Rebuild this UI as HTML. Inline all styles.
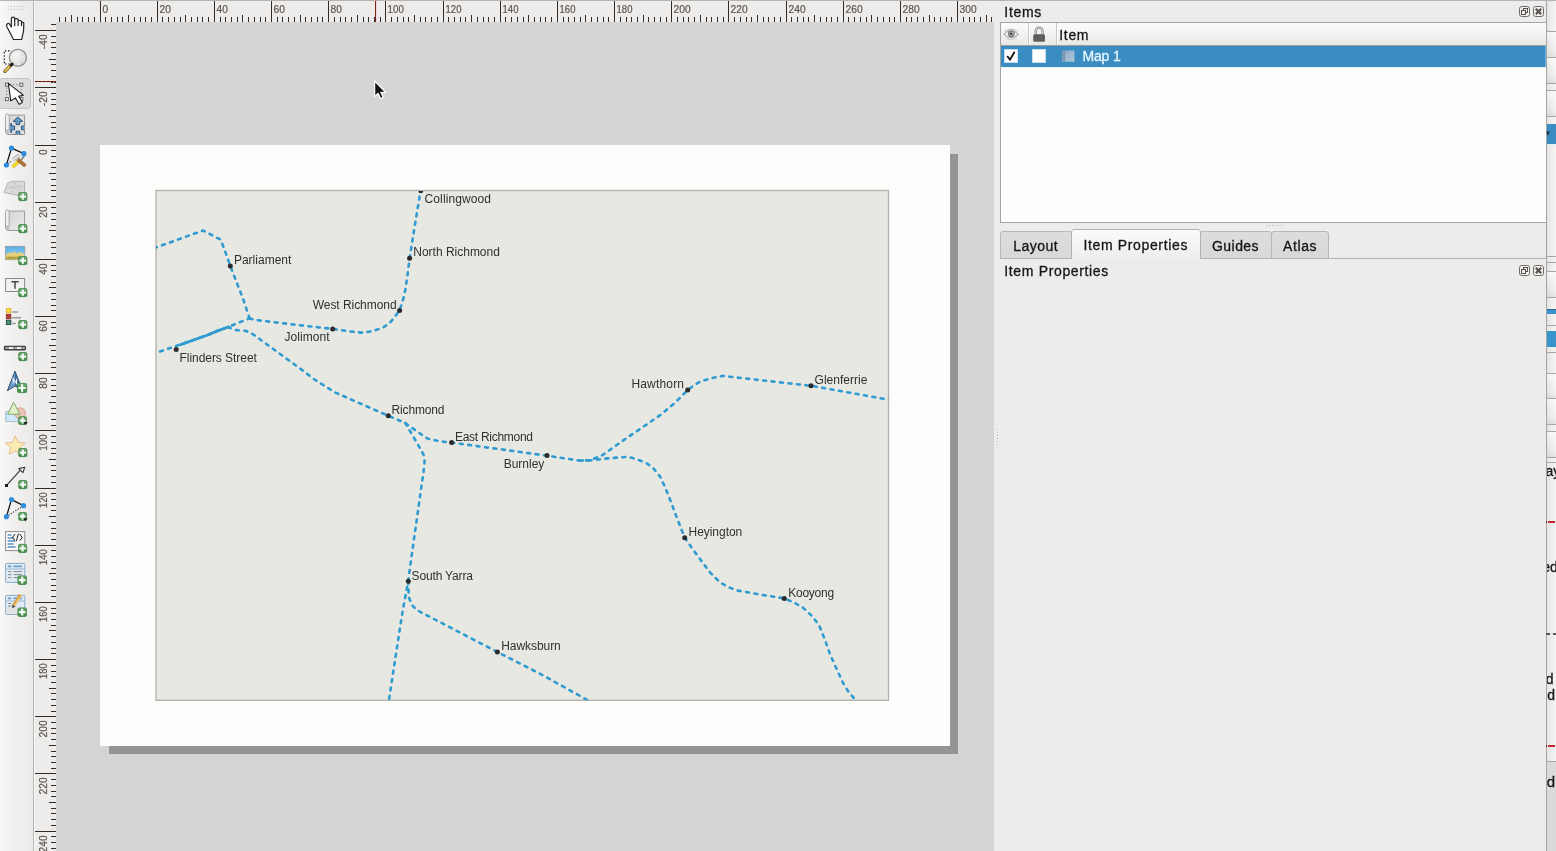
<!DOCTYPE html>
<html><head><meta charset="utf-8"><title>Layout</title>
<style>
html,body{margin:0;padding:0}
body{width:1556px;height:851px;overflow:hidden;position:relative;background:#edeceb;font-family:"Liberation Sans",sans-serif}
.abs{position:absolute;display:block}
</style></head><body>
<div class="abs" style="left:0;top:0;width:1556px;height:1px;background:#b5b4b2"></div>
<div class="abs" style="left:56px;top:22px;width:938px;height:829px;background:#d6d5d4"></div>
<svg class="abs" style="left:56px;top:22px" width="938" height="829" viewBox="56 22 938 829">
<rect x="109" y="154" width="849" height="600" fill="#969594" shape-rendering="crispEdges"/>
<rect x="100" y="145" width="850" height="601" fill="#fefdfc" shape-rendering="crispEdges"/>
<defs><clipPath id="mc"><rect x="156" y="191" width="732.5" height="509.3"/></clipPath></defs>
<rect x="156" y="190.5" width="732.5" height="509.8" fill="#e8e8e3" stroke="#b1b1af" stroke-width="1.35"/>
<g clip-path="url(#mc)" fill="none" stroke="#2f9bd0" stroke-width="2.6" stroke-linecap="round" stroke-linejoin="round" stroke-dasharray="3.0 5.5">
<path d="M154,248.2 L203,230.5 L220.6,239.6 L223.8,247.6 L230.3,265.9 L243.5,300 L249.5,318.3"/>
<path d="M249.5,318.3 L254.1,319.8 L300,325.3 L332.7,328.9 L350,331.5 L362.8,332.7 L373,331 L382.8,327.7 L389,323.5 L394,318 L399.6,310.4 L403,300 L405.3,290.1 L407.5,275 L409.6,258.3 L415.3,222.5 L420.3,192.5 L421,186"/>
<path d="M152,354.3 L180.4,344.5 L207.8,334.9 L217.5,330.8 L230,326.2 L249.5,318.3"/>
<path d="M228,327 L234.8,330 L245.4,330.8 L252.2,333.7 L300,368.4 L315.2,380 L335.2,392.5 L388.3,415.8 L405.3,423 L415,430 L427.8,438.8 L440,441.3 L451.6,442.6 L539,454.6 L547,455.6 L565,458.5 L580,460.6 L590,460.3 L602.6,455 L620.1,442.6 L640.2,428.9 L660.2,415.1 L675.2,402.6 L687.7,390 L694.6,384.8 L701,381.2 L711,378.3 L722.4,375.9 L811,385.8 L892,400.3"/>
<path d="M580,460.6 L590,460.5 L600,459.2 L612,458 L625,457 L632,457.8 L640,460.5 L647.7,463.9 L654,469 L660,476.4 L665,487 L670.2,500 L677,518 L684.7,537.7 L695.2,552.6 L710.2,572.6 L720.2,582.6 L728,587 L737.8,590.6 L760.3,594.6 L784.3,598.4 L795,603 L802.9,607.6 L812,616 L819.1,625.2 L825,640 L830.4,655.2 L842.9,682.7 L848,691 L858,703"/>
<path d="M405.3,423 L410,431 L415.3,440 L421,450 L423.7,455 L424.6,461 L423.6,472 L421.6,485 L415.3,530 L410.3,565 L408.3,581 L402.8,610 L396.6,650 L388.5,703"/>
<path d="M408.3,581 L408.5,590 L409,597.6 L412,605 L416.6,610 L497.4,652 L539,673.2 L590,701.5"/>
<path d="M180.6,344.6 L207.8,335 L217.5,330.9 L228.5,327" stroke-dasharray="none" stroke-width="2.8"/>
</g>
<g clip-path="url(#mc)" fill="#2b2b2b">
<circle cx="420.8" cy="190.8" r="2.5"/>
<circle cx="409.6" cy="258.3" r="2.5"/>
<circle cx="230.3" cy="265.9" r="2.5"/>
<circle cx="399.6" cy="310.4" r="2.5"/>
<circle cx="332.7" cy="328.9" r="2.5"/>
<circle cx="176.2" cy="349.5" r="2.5"/>
<circle cx="388.3" cy="415.8" r="2.5"/>
<circle cx="451.6" cy="442.6" r="2.5"/>
<circle cx="547" cy="455.6" r="2.5"/>
<circle cx="687.7" cy="390" r="2.5"/>
<circle cx="811" cy="385.8" r="2.5"/>
<circle cx="684.7" cy="537.7" r="2.5"/>
<circle cx="784.3" cy="598.4" r="2.5"/>
<circle cx="408.3" cy="581.2" r="2.5"/>
<circle cx="497.4" cy="652" r="2.5"/>
</g>
</svg>
<svg class="abs" style="left:56px;top:22px;will-change:transform;opacity:0.999" width="938" height="829" viewBox="56 22 938 829">
<g font-family="Liberation Sans, sans-serif" font-size="12" fill="#303030">
<text x="424.6" y="202.5" textLength="66.3" lengthAdjust="spacing">Collingwood</text>
<text x="413.3" y="256.3" textLength="86.6" lengthAdjust="spacing">North Richmond</text>
<text x="233.9" y="264.4" textLength="57.5" lengthAdjust="spacing">Parliament</text>
<text x="312.7" y="308.9" textLength="83.9" lengthAdjust="spacing">West Richmond</text>
<text x="284.4" y="341" textLength="45.3" lengthAdjust="spacing">Jolimont</text>
<text x="179.5" y="361.5" textLength="77.4" lengthAdjust="spacing">Flinders Street</text>
<text x="391.6" y="414" textLength="52.8" lengthAdjust="spacing">Richmond</text>
<text x="454.9" y="440.8" textLength="78.1" lengthAdjust="spacing">East Richmond</text>
<text x="503.7" y="467.7" textLength="40.6" lengthAdjust="spacing">Burnley</text>
<text x="631.4" y="388" textLength="52.6" lengthAdjust="spacing">Hawthorn</text>
<text x="814.6" y="383.8" textLength="52.8" lengthAdjust="spacing">Glenferrie</text>
<text x="688.5" y="536" textLength="53.8" lengthAdjust="spacing">Heyington</text>
<text x="788.3" y="596.9" textLength="45.8" lengthAdjust="spacing">Kooyong</text>
<text x="411.6" y="579.5" textLength="61.3" lengthAdjust="spacing">South Yarra</text>
<text x="501.2" y="650.2" textLength="59.6" lengthAdjust="spacing">Hawksburn</text>
</g>
<path d="M374.6,81 L374.6,96.6 L378.1,93.4 L380.6,98.7 L383.3,97.5 L380.9,92.3 L385.8,92.3 Z" fill="#111" stroke="#fbfbfb" stroke-width="1.3" stroke-linejoin="round"/>
</svg>
<svg class="abs" style="left:0;top:0" width="1556" height="851" viewBox="0 0 1556 851" shape-rendering="crispEdges">
<rect x="34" y="1" width="960" height="21" fill="#edeceb"/>
<rect x="34" y="22" width="22" height="829" fill="#edeceb"/>
<rect x="59" y="17" width="1" height="5" fill="#2e2b28"/>
<rect x="65" y="17" width="1" height="5" fill="#2e2b28"/>
<rect x="71" y="15" width="1" height="7" fill="#2e2b28"/>
<rect x="77" y="17" width="1" height="5" fill="#2e2b28"/>
<rect x="82" y="17" width="1" height="5" fill="#2e2b28"/>
<rect x="88" y="17" width="1" height="5" fill="#2e2b28"/>
<rect x="94" y="17" width="1" height="5" fill="#2e2b28"/>
<rect x="100" y="1" width="1" height="21" fill="#2e2b28"/>
<rect x="105" y="17" width="1" height="5" fill="#2e2b28"/>
<rect x="111" y="17" width="1" height="5" fill="#2e2b28"/>
<rect x="117" y="17" width="1" height="5" fill="#2e2b28"/>
<rect x="122" y="17" width="1" height="5" fill="#2e2b28"/>
<rect x="128" y="15" width="1" height="7" fill="#2e2b28"/>
<rect x="134" y="17" width="1" height="5" fill="#2e2b28"/>
<rect x="140" y="17" width="1" height="5" fill="#2e2b28"/>
<rect x="145" y="17" width="1" height="5" fill="#2e2b28"/>
<rect x="151" y="17" width="1" height="5" fill="#2e2b28"/>
<rect x="157" y="1" width="1" height="21" fill="#2e2b28"/>
<rect x="162" y="17" width="1" height="5" fill="#2e2b28"/>
<rect x="168" y="17" width="1" height="5" fill="#2e2b28"/>
<rect x="174" y="17" width="1" height="5" fill="#2e2b28"/>
<rect x="180" y="17" width="1" height="5" fill="#2e2b28"/>
<rect x="185" y="15" width="1" height="7" fill="#2e2b28"/>
<rect x="191" y="17" width="1" height="5" fill="#2e2b28"/>
<rect x="197" y="17" width="1" height="5" fill="#2e2b28"/>
<rect x="202" y="17" width="1" height="5" fill="#2e2b28"/>
<rect x="208" y="17" width="1" height="5" fill="#2e2b28"/>
<rect x="214" y="1" width="1" height="21" fill="#2e2b28"/>
<rect x="220" y="17" width="1" height="5" fill="#2e2b28"/>
<rect x="225" y="17" width="1" height="5" fill="#2e2b28"/>
<rect x="231" y="17" width="1" height="5" fill="#2e2b28"/>
<rect x="237" y="17" width="1" height="5" fill="#2e2b28"/>
<rect x="242" y="15" width="1" height="7" fill="#2e2b28"/>
<rect x="248" y="17" width="1" height="5" fill="#2e2b28"/>
<rect x="254" y="17" width="1" height="5" fill="#2e2b28"/>
<rect x="260" y="17" width="1" height="5" fill="#2e2b28"/>
<rect x="265" y="17" width="1" height="5" fill="#2e2b28"/>
<rect x="271" y="1" width="1" height="21" fill="#2e2b28"/>
<rect x="277" y="17" width="1" height="5" fill="#2e2b28"/>
<rect x="282" y="17" width="1" height="5" fill="#2e2b28"/>
<rect x="288" y="17" width="1" height="5" fill="#2e2b28"/>
<rect x="294" y="17" width="1" height="5" fill="#2e2b28"/>
<rect x="300" y="15" width="1" height="7" fill="#2e2b28"/>
<rect x="305" y="17" width="1" height="5" fill="#2e2b28"/>
<rect x="311" y="17" width="1" height="5" fill="#2e2b28"/>
<rect x="317" y="17" width="1" height="5" fill="#2e2b28"/>
<rect x="322" y="17" width="1" height="5" fill="#2e2b28"/>
<rect x="328" y="1" width="1" height="21" fill="#2e2b28"/>
<rect x="334" y="17" width="1" height="5" fill="#2e2b28"/>
<rect x="340" y="17" width="1" height="5" fill="#2e2b28"/>
<rect x="345" y="17" width="1" height="5" fill="#2e2b28"/>
<rect x="351" y="17" width="1" height="5" fill="#2e2b28"/>
<rect x="357" y="15" width="1" height="7" fill="#2e2b28"/>
<rect x="363" y="17" width="1" height="5" fill="#2e2b28"/>
<rect x="368" y="17" width="1" height="5" fill="#2e2b28"/>
<rect x="374" y="17" width="1" height="5" fill="#2e2b28"/>
<rect x="380" y="17" width="1" height="5" fill="#2e2b28"/>
<rect x="385" y="1" width="1" height="21" fill="#2e2b28"/>
<rect x="391" y="17" width="1" height="5" fill="#2e2b28"/>
<rect x="397" y="17" width="1" height="5" fill="#2e2b28"/>
<rect x="403" y="17" width="1" height="5" fill="#2e2b28"/>
<rect x="408" y="17" width="1" height="5" fill="#2e2b28"/>
<rect x="414" y="15" width="1" height="7" fill="#2e2b28"/>
<rect x="420" y="17" width="1" height="5" fill="#2e2b28"/>
<rect x="425" y="17" width="1" height="5" fill="#2e2b28"/>
<rect x="431" y="17" width="1" height="5" fill="#2e2b28"/>
<rect x="437" y="17" width="1" height="5" fill="#2e2b28"/>
<rect x="443" y="1" width="1" height="21" fill="#2e2b28"/>
<rect x="448" y="17" width="1" height="5" fill="#2e2b28"/>
<rect x="454" y="17" width="1" height="5" fill="#2e2b28"/>
<rect x="460" y="17" width="1" height="5" fill="#2e2b28"/>
<rect x="465" y="17" width="1" height="5" fill="#2e2b28"/>
<rect x="471" y="15" width="1" height="7" fill="#2e2b28"/>
<rect x="477" y="17" width="1" height="5" fill="#2e2b28"/>
<rect x="483" y="17" width="1" height="5" fill="#2e2b28"/>
<rect x="488" y="17" width="1" height="5" fill="#2e2b28"/>
<rect x="494" y="17" width="1" height="5" fill="#2e2b28"/>
<rect x="500" y="1" width="1" height="21" fill="#2e2b28"/>
<rect x="505" y="17" width="1" height="5" fill="#2e2b28"/>
<rect x="511" y="17" width="1" height="5" fill="#2e2b28"/>
<rect x="517" y="17" width="1" height="5" fill="#2e2b28"/>
<rect x="523" y="17" width="1" height="5" fill="#2e2b28"/>
<rect x="528" y="15" width="1" height="7" fill="#2e2b28"/>
<rect x="534" y="17" width="1" height="5" fill="#2e2b28"/>
<rect x="540" y="17" width="1" height="5" fill="#2e2b28"/>
<rect x="545" y="17" width="1" height="5" fill="#2e2b28"/>
<rect x="551" y="17" width="1" height="5" fill="#2e2b28"/>
<rect x="557" y="1" width="1" height="21" fill="#2e2b28"/>
<rect x="563" y="17" width="1" height="5" fill="#2e2b28"/>
<rect x="568" y="17" width="1" height="5" fill="#2e2b28"/>
<rect x="574" y="17" width="1" height="5" fill="#2e2b28"/>
<rect x="580" y="17" width="1" height="5" fill="#2e2b28"/>
<rect x="585" y="15" width="1" height="7" fill="#2e2b28"/>
<rect x="591" y="17" width="1" height="5" fill="#2e2b28"/>
<rect x="597" y="17" width="1" height="5" fill="#2e2b28"/>
<rect x="603" y="17" width="1" height="5" fill="#2e2b28"/>
<rect x="608" y="17" width="1" height="5" fill="#2e2b28"/>
<rect x="614" y="1" width="1" height="21" fill="#2e2b28"/>
<rect x="620" y="17" width="1" height="5" fill="#2e2b28"/>
<rect x="626" y="17" width="1" height="5" fill="#2e2b28"/>
<rect x="631" y="17" width="1" height="5" fill="#2e2b28"/>
<rect x="637" y="17" width="1" height="5" fill="#2e2b28"/>
<rect x="643" y="15" width="1" height="7" fill="#2e2b28"/>
<rect x="648" y="17" width="1" height="5" fill="#2e2b28"/>
<rect x="654" y="17" width="1" height="5" fill="#2e2b28"/>
<rect x="660" y="17" width="1" height="5" fill="#2e2b28"/>
<rect x="666" y="17" width="1" height="5" fill="#2e2b28"/>
<rect x="671" y="1" width="1" height="21" fill="#2e2b28"/>
<rect x="677" y="17" width="1" height="5" fill="#2e2b28"/>
<rect x="683" y="17" width="1" height="5" fill="#2e2b28"/>
<rect x="688" y="17" width="1" height="5" fill="#2e2b28"/>
<rect x="694" y="17" width="1" height="5" fill="#2e2b28"/>
<rect x="700" y="15" width="1" height="7" fill="#2e2b28"/>
<rect x="706" y="17" width="1" height="5" fill="#2e2b28"/>
<rect x="711" y="17" width="1" height="5" fill="#2e2b28"/>
<rect x="717" y="17" width="1" height="5" fill="#2e2b28"/>
<rect x="723" y="17" width="1" height="5" fill="#2e2b28"/>
<rect x="728" y="1" width="1" height="21" fill="#2e2b28"/>
<rect x="734" y="17" width="1" height="5" fill="#2e2b28"/>
<rect x="740" y="17" width="1" height="5" fill="#2e2b28"/>
<rect x="746" y="17" width="1" height="5" fill="#2e2b28"/>
<rect x="751" y="17" width="1" height="5" fill="#2e2b28"/>
<rect x="757" y="15" width="1" height="7" fill="#2e2b28"/>
<rect x="763" y="17" width="1" height="5" fill="#2e2b28"/>
<rect x="768" y="17" width="1" height="5" fill="#2e2b28"/>
<rect x="774" y="17" width="1" height="5" fill="#2e2b28"/>
<rect x="780" y="17" width="1" height="5" fill="#2e2b28"/>
<rect x="786" y="1" width="1" height="21" fill="#2e2b28"/>
<rect x="791" y="17" width="1" height="5" fill="#2e2b28"/>
<rect x="797" y="17" width="1" height="5" fill="#2e2b28"/>
<rect x="803" y="17" width="1" height="5" fill="#2e2b28"/>
<rect x="808" y="17" width="1" height="5" fill="#2e2b28"/>
<rect x="814" y="15" width="1" height="7" fill="#2e2b28"/>
<rect x="820" y="17" width="1" height="5" fill="#2e2b28"/>
<rect x="826" y="17" width="1" height="5" fill="#2e2b28"/>
<rect x="831" y="17" width="1" height="5" fill="#2e2b28"/>
<rect x="837" y="17" width="1" height="5" fill="#2e2b28"/>
<rect x="843" y="1" width="1" height="21" fill="#2e2b28"/>
<rect x="848" y="17" width="1" height="5" fill="#2e2b28"/>
<rect x="854" y="17" width="1" height="5" fill="#2e2b28"/>
<rect x="860" y="17" width="1" height="5" fill="#2e2b28"/>
<rect x="866" y="17" width="1" height="5" fill="#2e2b28"/>
<rect x="871" y="15" width="1" height="7" fill="#2e2b28"/>
<rect x="877" y="17" width="1" height="5" fill="#2e2b28"/>
<rect x="883" y="17" width="1" height="5" fill="#2e2b28"/>
<rect x="889" y="17" width="1" height="5" fill="#2e2b28"/>
<rect x="894" y="17" width="1" height="5" fill="#2e2b28"/>
<rect x="900" y="1" width="1" height="21" fill="#2e2b28"/>
<rect x="906" y="17" width="1" height="5" fill="#2e2b28"/>
<rect x="911" y="17" width="1" height="5" fill="#2e2b28"/>
<rect x="917" y="17" width="1" height="5" fill="#2e2b28"/>
<rect x="923" y="17" width="1" height="5" fill="#2e2b28"/>
<rect x="929" y="15" width="1" height="7" fill="#2e2b28"/>
<rect x="934" y="17" width="1" height="5" fill="#2e2b28"/>
<rect x="940" y="17" width="1" height="5" fill="#2e2b28"/>
<rect x="946" y="17" width="1" height="5" fill="#2e2b28"/>
<rect x="951" y="17" width="1" height="5" fill="#2e2b28"/>
<rect x="957" y="1" width="1" height="21" fill="#2e2b28"/>
<rect x="963" y="17" width="1" height="5" fill="#2e2b28"/>
<rect x="969" y="17" width="1" height="5" fill="#2e2b28"/>
<rect x="974" y="17" width="1" height="5" fill="#2e2b28"/>
<rect x="980" y="17" width="1" height="5" fill="#2e2b28"/>
<rect x="986" y="15" width="1" height="7" fill="#2e2b28"/>
<rect x="991" y="17" width="1" height="5" fill="#2e2b28"/>
<rect x="51" y="24" width="5" height="1" fill="#2e2b28"/>
<rect x="35" y="30" width="21" height="1" fill="#2e2b28"/>
<rect x="51" y="36" width="5" height="1" fill="#2e2b28"/>
<rect x="51" y="42" width="5" height="1" fill="#2e2b28"/>
<rect x="51" y="47" width="5" height="1" fill="#2e2b28"/>
<rect x="51" y="53" width="5" height="1" fill="#2e2b28"/>
<rect x="49" y="59" width="7" height="1" fill="#2e2b28"/>
<rect x="51" y="64" width="5" height="1" fill="#2e2b28"/>
<rect x="51" y="70" width="5" height="1" fill="#2e2b28"/>
<rect x="51" y="76" width="5" height="1" fill="#2e2b28"/>
<rect x="51" y="82" width="5" height="1" fill="#2e2b28"/>
<rect x="35" y="87" width="21" height="1" fill="#2e2b28"/>
<rect x="51" y="93" width="5" height="1" fill="#2e2b28"/>
<rect x="51" y="99" width="5" height="1" fill="#2e2b28"/>
<rect x="51" y="104" width="5" height="1" fill="#2e2b28"/>
<rect x="51" y="110" width="5" height="1" fill="#2e2b28"/>
<rect x="49" y="116" width="7" height="1" fill="#2e2b28"/>
<rect x="51" y="122" width="5" height="1" fill="#2e2b28"/>
<rect x="51" y="127" width="5" height="1" fill="#2e2b28"/>
<rect x="51" y="133" width="5" height="1" fill="#2e2b28"/>
<rect x="51" y="139" width="5" height="1" fill="#2e2b28"/>
<rect x="35" y="145" width="21" height="1" fill="#2e2b28"/>
<rect x="51" y="150" width="5" height="1" fill="#2e2b28"/>
<rect x="51" y="156" width="5" height="1" fill="#2e2b28"/>
<rect x="51" y="162" width="5" height="1" fill="#2e2b28"/>
<rect x="51" y="167" width="5" height="1" fill="#2e2b28"/>
<rect x="49" y="173" width="7" height="1" fill="#2e2b28"/>
<rect x="51" y="179" width="5" height="1" fill="#2e2b28"/>
<rect x="51" y="185" width="5" height="1" fill="#2e2b28"/>
<rect x="51" y="190" width="5" height="1" fill="#2e2b28"/>
<rect x="51" y="196" width="5" height="1" fill="#2e2b28"/>
<rect x="35" y="202" width="21" height="1" fill="#2e2b28"/>
<rect x="51" y="207" width="5" height="1" fill="#2e2b28"/>
<rect x="51" y="213" width="5" height="1" fill="#2e2b28"/>
<rect x="51" y="219" width="5" height="1" fill="#2e2b28"/>
<rect x="51" y="225" width="5" height="1" fill="#2e2b28"/>
<rect x="49" y="230" width="7" height="1" fill="#2e2b28"/>
<rect x="51" y="236" width="5" height="1" fill="#2e2b28"/>
<rect x="51" y="242" width="5" height="1" fill="#2e2b28"/>
<rect x="51" y="247" width="5" height="1" fill="#2e2b28"/>
<rect x="51" y="253" width="5" height="1" fill="#2e2b28"/>
<rect x="35" y="259" width="21" height="1" fill="#2e2b28"/>
<rect x="51" y="265" width="5" height="1" fill="#2e2b28"/>
<rect x="51" y="270" width="5" height="1" fill="#2e2b28"/>
<rect x="51" y="276" width="5" height="1" fill="#2e2b28"/>
<rect x="51" y="282" width="5" height="1" fill="#2e2b28"/>
<rect x="49" y="287" width="7" height="1" fill="#2e2b28"/>
<rect x="51" y="293" width="5" height="1" fill="#2e2b28"/>
<rect x="51" y="299" width="5" height="1" fill="#2e2b28"/>
<rect x="51" y="305" width="5" height="1" fill="#2e2b28"/>
<rect x="51" y="310" width="5" height="1" fill="#2e2b28"/>
<rect x="35" y="316" width="21" height="1" fill="#2e2b28"/>
<rect x="51" y="322" width="5" height="1" fill="#2e2b28"/>
<rect x="51" y="327" width="5" height="1" fill="#2e2b28"/>
<rect x="51" y="333" width="5" height="1" fill="#2e2b28"/>
<rect x="51" y="339" width="5" height="1" fill="#2e2b28"/>
<rect x="49" y="345" width="7" height="1" fill="#2e2b28"/>
<rect x="51" y="350" width="5" height="1" fill="#2e2b28"/>
<rect x="51" y="356" width="5" height="1" fill="#2e2b28"/>
<rect x="51" y="362" width="5" height="1" fill="#2e2b28"/>
<rect x="51" y="367" width="5" height="1" fill="#2e2b28"/>
<rect x="35" y="373" width="21" height="1" fill="#2e2b28"/>
<rect x="51" y="379" width="5" height="1" fill="#2e2b28"/>
<rect x="51" y="385" width="5" height="1" fill="#2e2b28"/>
<rect x="51" y="390" width="5" height="1" fill="#2e2b28"/>
<rect x="51" y="396" width="5" height="1" fill="#2e2b28"/>
<rect x="49" y="402" width="7" height="1" fill="#2e2b28"/>
<rect x="51" y="408" width="5" height="1" fill="#2e2b28"/>
<rect x="51" y="413" width="5" height="1" fill="#2e2b28"/>
<rect x="51" y="419" width="5" height="1" fill="#2e2b28"/>
<rect x="51" y="425" width="5" height="1" fill="#2e2b28"/>
<rect x="35" y="430" width="21" height="1" fill="#2e2b28"/>
<rect x="51" y="436" width="5" height="1" fill="#2e2b28"/>
<rect x="51" y="442" width="5" height="1" fill="#2e2b28"/>
<rect x="51" y="448" width="5" height="1" fill="#2e2b28"/>
<rect x="51" y="453" width="5" height="1" fill="#2e2b28"/>
<rect x="49" y="459" width="7" height="1" fill="#2e2b28"/>
<rect x="51" y="465" width="5" height="1" fill="#2e2b28"/>
<rect x="51" y="470" width="5" height="1" fill="#2e2b28"/>
<rect x="51" y="476" width="5" height="1" fill="#2e2b28"/>
<rect x="51" y="482" width="5" height="1" fill="#2e2b28"/>
<rect x="35" y="488" width="21" height="1" fill="#2e2b28"/>
<rect x="51" y="493" width="5" height="1" fill="#2e2b28"/>
<rect x="51" y="499" width="5" height="1" fill="#2e2b28"/>
<rect x="51" y="505" width="5" height="1" fill="#2e2b28"/>
<rect x="51" y="510" width="5" height="1" fill="#2e2b28"/>
<rect x="49" y="516" width="7" height="1" fill="#2e2b28"/>
<rect x="51" y="522" width="5" height="1" fill="#2e2b28"/>
<rect x="51" y="528" width="5" height="1" fill="#2e2b28"/>
<rect x="51" y="533" width="5" height="1" fill="#2e2b28"/>
<rect x="51" y="539" width="5" height="1" fill="#2e2b28"/>
<rect x="35" y="545" width="21" height="1" fill="#2e2b28"/>
<rect x="51" y="550" width="5" height="1" fill="#2e2b28"/>
<rect x="51" y="556" width="5" height="1" fill="#2e2b28"/>
<rect x="51" y="562" width="5" height="1" fill="#2e2b28"/>
<rect x="51" y="568" width="5" height="1" fill="#2e2b28"/>
<rect x="49" y="573" width="7" height="1" fill="#2e2b28"/>
<rect x="51" y="579" width="5" height="1" fill="#2e2b28"/>
<rect x="51" y="585" width="5" height="1" fill="#2e2b28"/>
<rect x="51" y="590" width="5" height="1" fill="#2e2b28"/>
<rect x="51" y="596" width="5" height="1" fill="#2e2b28"/>
<rect x="35" y="602" width="21" height="1" fill="#2e2b28"/>
<rect x="51" y="608" width="5" height="1" fill="#2e2b28"/>
<rect x="51" y="613" width="5" height="1" fill="#2e2b28"/>
<rect x="51" y="619" width="5" height="1" fill="#2e2b28"/>
<rect x="51" y="625" width="5" height="1" fill="#2e2b28"/>
<rect x="49" y="630" width="7" height="1" fill="#2e2b28"/>
<rect x="51" y="636" width="5" height="1" fill="#2e2b28"/>
<rect x="51" y="642" width="5" height="1" fill="#2e2b28"/>
<rect x="51" y="648" width="5" height="1" fill="#2e2b28"/>
<rect x="51" y="653" width="5" height="1" fill="#2e2b28"/>
<rect x="35" y="659" width="21" height="1" fill="#2e2b28"/>
<rect x="51" y="665" width="5" height="1" fill="#2e2b28"/>
<rect x="51" y="671" width="5" height="1" fill="#2e2b28"/>
<rect x="51" y="676" width="5" height="1" fill="#2e2b28"/>
<rect x="51" y="682" width="5" height="1" fill="#2e2b28"/>
<rect x="49" y="688" width="7" height="1" fill="#2e2b28"/>
<rect x="51" y="693" width="5" height="1" fill="#2e2b28"/>
<rect x="51" y="699" width="5" height="1" fill="#2e2b28"/>
<rect x="51" y="705" width="5" height="1" fill="#2e2b28"/>
<rect x="51" y="711" width="5" height="1" fill="#2e2b28"/>
<rect x="35" y="716" width="21" height="1" fill="#2e2b28"/>
<rect x="51" y="722" width="5" height="1" fill="#2e2b28"/>
<rect x="51" y="728" width="5" height="1" fill="#2e2b28"/>
<rect x="51" y="733" width="5" height="1" fill="#2e2b28"/>
<rect x="51" y="739" width="5" height="1" fill="#2e2b28"/>
<rect x="49" y="745" width="7" height="1" fill="#2e2b28"/>
<rect x="51" y="751" width="5" height="1" fill="#2e2b28"/>
<rect x="51" y="756" width="5" height="1" fill="#2e2b28"/>
<rect x="51" y="762" width="5" height="1" fill="#2e2b28"/>
<rect x="51" y="768" width="5" height="1" fill="#2e2b28"/>
<rect x="35" y="773" width="21" height="1" fill="#2e2b28"/>
<rect x="51" y="779" width="5" height="1" fill="#2e2b28"/>
<rect x="51" y="785" width="5" height="1" fill="#2e2b28"/>
<rect x="51" y="791" width="5" height="1" fill="#2e2b28"/>
<rect x="51" y="796" width="5" height="1" fill="#2e2b28"/>
<rect x="49" y="802" width="7" height="1" fill="#2e2b28"/>
<rect x="51" y="808" width="5" height="1" fill="#2e2b28"/>
<rect x="51" y="813" width="5" height="1" fill="#2e2b28"/>
<rect x="51" y="819" width="5" height="1" fill="#2e2b28"/>
<rect x="51" y="825" width="5" height="1" fill="#2e2b28"/>
<rect x="35" y="831" width="21" height="1" fill="#2e2b28"/>
<rect x="51" y="836" width="5" height="1" fill="#2e2b28"/>
<rect x="51" y="842" width="5" height="1" fill="#2e2b28"/>
<rect x="51" y="848" width="5" height="1" fill="#2e2b28"/>
</svg>
<svg class="abs" style="left:0;top:0;will-change:transform;opacity:0.999" width="1556" height="851" viewBox="0 0 1556 851" font-family="Liberation Sans, sans-serif" font-size="10.2" fill="#5a554f" stroke="#5a554f" stroke-width="0.2">
<text x="102.6" y="12.8">0</text>
<text x="159.6" y="12.8">20</text>
<text x="216.6" y="12.8">40</text>
<text x="273.6" y="12.8">60</text>
<text x="330.6" y="12.8">80</text>
<text x="387.6" y="12.8" textLength="16.3" lengthAdjust="spacingAndGlyphs">100</text>
<text x="445.6" y="12.8" textLength="15.8" lengthAdjust="spacingAndGlyphs">120</text>
<text x="502.6" y="12.8" textLength="15.8" lengthAdjust="spacingAndGlyphs">140</text>
<text x="559.6" y="12.8" textLength="15.8" lengthAdjust="spacingAndGlyphs">160</text>
<text x="616.6" y="12.8" textLength="15.8" lengthAdjust="spacingAndGlyphs">180</text>
<text x="673.6" y="12.8">200</text>
<text x="730.6" y="12.8">220</text>
<text x="788.6" y="12.8">240</text>
<text x="845.6" y="12.8">260</text>
<text x="902.6" y="12.8">280</text>
<text x="959.6" y="12.8">300</text>
<text transform="translate(46.6,34.4) rotate(-90)" text-anchor="end">-40</text>
<text transform="translate(46.6,91.4) rotate(-90)" text-anchor="end">-20</text>
<text transform="translate(46.6,149.4) rotate(-90)" text-anchor="end">0</text>
<text transform="translate(46.6,206.4) rotate(-90)" text-anchor="end">20</text>
<text transform="translate(46.6,263.4) rotate(-90)" text-anchor="end">40</text>
<text transform="translate(46.6,320.4) rotate(-90)" text-anchor="end">60</text>
<text transform="translate(46.6,377.4) rotate(-90)" text-anchor="end">80</text>
<text transform="translate(46.6,434.4) rotate(-90)" text-anchor="end" textLength="16.4" lengthAdjust="spacingAndGlyphs">100</text>
<text transform="translate(46.6,492.4) rotate(-90)" text-anchor="end" textLength="15.5" lengthAdjust="spacingAndGlyphs">120</text>
<text transform="translate(46.6,549.4) rotate(-90)" text-anchor="end" textLength="15.5" lengthAdjust="spacingAndGlyphs">140</text>
<text transform="translate(46.6,606.4) rotate(-90)" text-anchor="end" textLength="15.5" lengthAdjust="spacingAndGlyphs">160</text>
<text transform="translate(46.6,663.4) rotate(-90)" text-anchor="end" textLength="15.5" lengthAdjust="spacingAndGlyphs">180</text>
<text transform="translate(46.6,720.4) rotate(-90)" text-anchor="end">200</text>
<text transform="translate(46.6,777.4) rotate(-90)" text-anchor="end">220</text>
<text transform="translate(46.6,835.4) rotate(-90)" text-anchor="end">240</text>
</svg>
<div class="abs" style="left:375px;top:1px;width:1px;height:21px;background:#7c2414"></div>
<div class="abs" style="left:376px;top:1px;width:1px;height:21px;background:repeating-linear-gradient(#f0b8c8 0 1px,transparent 1px 2px)"></div>
<div class="abs" style="left:35px;top:81px;width:21px;height:1px;background:repeating-linear-gradient(90deg,#571a05 0 3px,#c23a2a 3px 4px)"></div>
<div class="abs" style="left:35px;top:82px;width:21px;height:1px;background:repeating-linear-gradient(90deg,#f3d3dc 0 1px,transparent 1px 3px)"></div>
<div class="abs" style="left:34px;top:1px;width:1px;height:850px;background:#f8f8f7"></div>
<svg class="abs" style="left:0;top:0" width="34" height="851" viewBox="0 0 34 851" font-family="Liberation Sans, sans-serif">
<defs>
<linearGradient id="tb" x1="0" y1="0" x2="1" y2="0"><stop offset="0" stop-color="#f8f8f7"/><stop offset="0.5" stop-color="#f0efee"/><stop offset="1" stop-color="#ebeae9"/></linearGradient>
<linearGradient id="scr" x1="0" y1="0" x2="1" y2="1"><stop offset="0" stop-color="#d3d3d2"/><stop offset="1" stop-color="#ebebea"/></linearGradient>
<radialGradient id="lens" cx="0.4" cy="0.35" r="0.7"><stop offset="0" stop-color="#f4f4f3"/><stop offset="1" stop-color="#dcdcdb"/></radialGradient>
<linearGradient id="bdg" x1="0" y1="0" x2="0" y2="1"><stop offset="0" stop-color="#6faa74"/><stop offset="0.45" stop-color="#4e9554"/><stop offset="1" stop-color="#418d48"/></linearGradient>
<linearGradient id="sky" x1="0" y1="0" x2="0" y2="1"><stop offset="0" stop-color="#58aee6"/><stop offset="1" stop-color="#a8d6f2"/></linearGradient>
</defs>
<rect x="0" y="1" width="33" height="850" fill="url(#tb)"/>
<rect x="33" y="1" width="1" height="850" fill="#b7b6b4"/>
<rect x="8" y="6" width="1" height="1" fill="#bfbebc"/>
<rect x="11" y="6" width="1" height="1" fill="#bfbebc"/>
<rect x="14" y="6" width="1" height="1" fill="#bfbebc"/>
<rect x="17" y="6" width="1" height="1" fill="#bfbebc"/>
<rect x="20" y="6" width="1" height="1" fill="#bfbebc"/>
<rect x="23" y="6" width="1" height="1" fill="#bfbebc"/>
<rect x="8" y="9" width="1" height="1" fill="#bfbebc"/>
<rect x="11" y="9" width="1" height="1" fill="#bfbebc"/>
<rect x="14" y="9" width="1" height="1" fill="#bfbebc"/>
<rect x="17" y="9" width="1" height="1" fill="#bfbebc"/>
<rect x="20" y="9" width="1" height="1" fill="#bfbebc"/>
<rect x="23" y="9" width="1" height="1" fill="#bfbebc"/>
<path d="M11.3,27 L9.3,23.7 Q8.1,22.9 7,24.1 Q6.2,25.2 6.9,26.7 L13.5,39.5 H21.6 Q23.1,33.5 23.6,30.4 L23.8,23.1 Q23.7,22.3 22.6,22.3 Q21.6,22.3 21.5,23.1 V25.6 V21.3 Q21.4,20.5 19.8,20.5 Q18.2,20.5 18.1,21.3 V25.6 V19.5 Q18,18.6 16.4,18.6 Q14.8,18.6 14.7,19.5 V25.6 V18.4 Q14.6,17.2 13,17.2 Q11.5,17.2 11.4,18.4 Z" fill="#fdfdfd" stroke="#262524" stroke-width="1.2" stroke-linejoin="round"/>
<path d="M9.6,50.9 H4.3 V64 H9.8" fill="none" stroke="#1a1a1a" stroke-width="1.2" stroke-dasharray="1.6 1.6"/>
<circle cx="17.9" cy="57.8" r="8.5" fill="url(#lens)" stroke="#8f8e8c" stroke-width="1.3"/>
<path d="M20,62.6 H24.4 M21.6,55.5 h1 M21.6,59.5 h1" stroke="#c9c8c6" stroke-width="1" fill="none"/>
<path d="M11.4,64.8 L4.9,71.4" stroke="#6b5a2a" stroke-width="3.3" stroke-linecap="round"/>
<path d="M11,65.2 L5.2,71.1" stroke="#efc649" stroke-width="1.9" stroke-linecap="round"/>
<path d="M12.4,63.8 L10.8,65.4" stroke="#1a1a1a" stroke-width="2.6" stroke-linecap="round"/>
<rect x="-2" y="78.5" width="32.5" height="30" rx="3.5" fill="#dddcdb" stroke="#c6c5c3" stroke-width="1"/>
<rect x="6.8" y="84.6" width="14.6" height="14.6" fill="none" stroke="#6b6a68" stroke-width="1" stroke-dasharray="1 2.2"/>
<rect x="5.4" y="83.2" width="3" height="3" fill="#f4f4f3" stroke="#6b6a68" stroke-width="1"/>
<rect x="19.8" y="83.2" width="3" height="3" fill="#f4f4f3" stroke="#6b6a68" stroke-width="1"/>
<rect x="5.4" y="97.6" width="3" height="3" fill="#f4f4f3" stroke="#6b6a68" stroke-width="1"/>
<rect x="19.8" y="97.6" width="3" height="3" fill="#f4f4f3" stroke="#6b6a68" stroke-width="1"/>
<path d="M8.3,83.3 L10.8,100.9 L15.4,97.9 L19.3,104.4 L22.4,102.4 L18.6,96.3 L23.3,95.2 Z" fill="#fdfdfd" stroke="#161616" stroke-width="1.05" stroke-linejoin="round"/>
<path d="M9.2,115.1 H24.6 V134.5 H7.9 Q5.5,134 5.5,131.4 V128" fill="url(#scr)" stroke="#9b9a98" stroke-width="1"/><path d="M5.9,130.4 H9.2 V134 H8 Q5.9,133.6 5.9,131.4 Z" fill="#c6c6c5"/><rect x="5.5" y="114.1" width="3.7" height="16.3" rx="1.5" fill="#efefee" stroke="#a09f9d" stroke-width="0.9"/>
<clipPath id="pgc"><rect x="9.8" y="115.6" width="14.4" height="18.7"/></clipPath>
<g clip-path="url(#pgc)" fill="#6a9bc6" stroke="#1f4b75" stroke-width="0.9" stroke-linejoin="round"><path d="M17.9,117.1 L22.7,121.4 H19.8 V124.6 H16 V121.4 H13.1 Z"/><path d="M7,127.9 L11.4,123 V126 H14.6 V129.8 H11.4 V132.8 Z"/><path d="M28.8,127.9 L24.4,123 V126 H21.4 V129.8 H24.4 V132.8 Z"/><path d="M17.9,138.8 L22.7,134.4 H19.8 V131.2 H16 V134.4 H13.1 Z"/></g>
<path d="M11.5,148.1 L23.9,153.7 M11.5,148.1 L6.4,165" stroke="#151515" stroke-width="1.3" fill="none"/>
<path d="M8.6,163.3 L12,160.6" stroke="#151515" stroke-width="1.1" stroke-dasharray="1 1.4" fill="none"/>
<path d="M21,159.8 L24.2,156.3" stroke="#8d8c8a" stroke-width="2"/>
<path d="M12.6,167 L19.9,160.2" stroke="#d9b51c" stroke-width="3.4"/><path d="M12.8,166.8 L19.7,160.4" stroke="#f7df2c" stroke-width="2.2"/>
<path d="M17.6,159.4 L25.4,166" stroke="#8c5a22" stroke-width="3.6"/><path d="M17.8,159.6 L25.2,165.8" stroke="#b07a36" stroke-width="2.4"/>
<path d="M13,159.8 L19.4,155.2" stroke="#a4a3a1" stroke-width="3.6"/><path d="M13.2,159.6 L19.2,155.4" stroke="#e2e2e1" stroke-width="2.2"/>
<circle cx="11.5" cy="148.1" r="2.6" fill="#2b8ce0"/>
<circle cx="23.9" cy="153.7" r="2.6" fill="#2b8ce0"/>
<circle cx="6.4" cy="165" r="2.6" fill="#2b8ce0"/>
<path d="M7.5,183.3 L12,181.2 L24.6,181.4 L24.5,192 L18,195.5 L4,192.5 Z" fill="#dbdbda" stroke="#b1b0ae" stroke-width="0.9" stroke-linejoin="round"/>
<path d="M6,188 L24.5,186.4 M12,181.2 L23.4,190.8 M16.2,181.4 L11,194 M20.4,181.4 L18,195.2 M9.6,185.6 L17,189.8" stroke="#c2c1bf" stroke-width="0.7" fill="none"/>
<rect x="18.7" y="192.5" width="8.2" height="8.2" rx="1.4" fill="url(#bdg)" stroke="#3f8446" stroke-width="0.8" opacity="0.95"/><path d="M22.799999999999997,193.4 V199.79999999999998 M19.599999999999998,196.6 H26.0" stroke="#f3f9f5" stroke-width="2.2" fill="none" opacity="0.95"/>
<path d="M9.2,211.1 H24.6 V230.5 H7.9 Q5.5,230 5.5,227.4 V224" fill="url(#scr)" stroke="#9b9a98" stroke-width="1"/><path d="M5.9,226.4 H9.2 V230 H8 Q5.9,229.6 5.9,227.4 Z" fill="#c6c6c5"/><rect x="5.5" y="210.1" width="3.7" height="16.3" rx="1.5" fill="#efefee" stroke="#a09f9d" stroke-width="0.9"/>
<rect x="18.7" y="224.5" width="8.2" height="8.2" rx="1.4" fill="url(#bdg)" stroke="#3f8446" stroke-width="0.8" opacity="1"/><path d="M22.799999999999997,225.4 V231.79999999999998 M19.599999999999998,228.6 H26.0" stroke="#f3f9f5" stroke-width="2.2" fill="none" opacity="1"/>
<rect x="5.4" y="246.3" width="19.4" height="13.4" fill="url(#sky)" stroke="#8f9aa3" stroke-width="0.8"/>
<path d="M5.8,254.8 L9,252.4 L11.4,253.4 L14,251.6 L17,253.2 L20,252 L24.4,254.6 V259.3 H5.8 Z" fill="#e9cf7a"/>
<path d="M5.8,256.6 H24.4 V259.3 H5.8 Z" fill="#c9a441"/>
<path d="M8,258 h1.2 M11,257.4 h1.2 M14,258 h1.2 M17,257.6 h1.2" stroke="#3c9a54" stroke-width="1"/>
<rect x="18.7" y="256.5" width="8.2" height="8.2" rx="1.4" fill="url(#bdg)" stroke="#3f8446" stroke-width="0.8" opacity="1"/><path d="M22.799999999999997,257.4 V263.8 M19.599999999999998,260.6 H26.0" stroke="#f3f9f5" stroke-width="2.2" fill="none" opacity="1"/>
<rect x="5.6" y="278.5" width="19" height="13" fill="#f1f1f0" stroke="#8c8b89" stroke-width="1"/>
<path d="M11.4,281.8 H18.6 M15,281.8 V288.8" stroke="#4a4948" stroke-width="1.5" fill="none"/>
<rect x="18.7" y="288.5" width="8.2" height="8.2" rx="1.4" fill="url(#bdg)" stroke="#3f8446" stroke-width="0.8" opacity="1"/><path d="M22.799999999999997,289.4 V295.8 M19.599999999999998,292.6 H26.0" stroke="#f3f9f5" stroke-width="2.2" fill="none" opacity="1"/>
<rect x="6.3" y="308.6" width="4.6" height="4.4" fill="#f6dd3c" stroke="#e2a53a" stroke-width="0.8"/>
<rect x="6.3" y="314.4" width="4.6" height="4.4" fill="#b7423c" stroke="#8e2e2a" stroke-width="0.8"/>
<rect x="6.3" y="320.2" width="4.6" height="4.4" fill="#3f9a55" stroke="#1f3a5a" stroke-width="0.8"/>
<path d="M12.2,312 H18 M12.2,317.8 H21 M12.2,323.6 H15.8" stroke="#9b9a98" stroke-width="1.5"/>
<rect x="18.7" y="320.5" width="8.2" height="8.2" rx="1.4" fill="url(#bdg)" stroke="#3f8446" stroke-width="0.8" opacity="1"/><path d="M22.799999999999997,321.4 V327.8 M19.599999999999998,324.6 H26.0" stroke="#f3f9f5" stroke-width="2.2" fill="none" opacity="1"/>
<rect x="4.4" y="346.3" width="21" height="3.6" rx="0.9" fill="#9a9997" stroke="#2f2e2d" stroke-width="1.1"/>
<rect x="9" y="347.2" width="4" height="1.8" fill="#fafafa"/><rect x="17" y="347.2" width="4" height="1.8" fill="#fafafa"/>
<rect x="18.7" y="352.5" width="8.2" height="8.2" rx="1.4" fill="url(#bdg)" stroke="#3f8446" stroke-width="0.8" opacity="1"/><path d="M22.799999999999997,353.4 V359.8 M19.599999999999998,356.6 H26.0" stroke="#f3f9f5" stroke-width="2.2" fill="none" opacity="1"/>
<path d="M15,371.2 L22.4,390 L15,386 L7.4,390.7 Z" fill="#6b9dca" stroke="#2a4a6a" stroke-width="1" stroke-linejoin="round"/>
<path d="M15,371.2 L22.4,390 L15,386 Z" fill="#3d6d99"/>
<path d="M13.2,383.6 V378.8 L16.6,383.6 V378.8" stroke="#f2f7fc" stroke-width="1.1" fill="none"/>
<rect x="17.5" y="383.40000000000003" width="9.2" height="9.2" rx="1.4" fill="url(#bdg)" stroke="#3f8446" stroke-width="0.8" opacity="1"/><path d="M22.1,384.3 V391.70000000000005 M18.4,388.00000000000006 H25.8" stroke="#f3f9f5" stroke-width="2.2" fill="none" opacity="1"/>
<rect x="5.8" y="411.6" width="13" height="10" fill="#cfe9fa" stroke="#9fb9d1" stroke-width="0.9"/>
<circle cx="20" cy="413.2" r="5.4" fill="#e9c4b4" stroke="#d98a7c" stroke-width="0.8"/>
<path d="M13.6,402.4 L20,414.2 H7.6 Z" fill="#e4efc9" stroke="#6aa55c" stroke-width="0.9" stroke-linejoin="round"/>
<rect x="18.7" y="416.7" width="7.8" height="7.8" rx="1.4" fill="url(#bdg)" stroke="#3f8446" stroke-width="0.8" opacity="1"/><path d="M22.599999999999998,417.59999999999997 V423.6 M19.599999999999998,420.59999999999997 H25.6" stroke="#f3f9f5" stroke-width="2.2" fill="none" opacity="1"/>
<path d="M23.400000000000002,422.2 H27.8 L25.6,425.0 Z" fill="#1a1a1a"/>
<path d="M15.2,435.8 L18.2,442.4 L25.2,443 L19.9,447.6 L21.6,454.4 L15.2,450.8 L9,454.4 L10.6,447.6 L5.4,443 L12.4,442.4 Z" fill="#fcebb2" stroke="#e6bc90" stroke-width="1" stroke-linejoin="round"/>
<rect x="18.7" y="448.5" width="8.2" height="8.2" rx="1.4" fill="url(#bdg)" stroke="#3f8446" stroke-width="0.8" opacity="1"/><path d="M22.799999999999997,449.4 V455.8 M19.599999999999998,452.6 H26.0" stroke="#f3f9f5" stroke-width="2.2" fill="none" opacity="1"/>
<path d="M6.6,485.4 L20.6,469.8" stroke="#3a3938" stroke-width="1.2"/>
<rect x="5" y="484" width="3" height="3" fill="#1c1c1c"/>
<path d="M24.8,467.2 L23,472.6 L18.8,468.6 Z" fill="#f3f3f2" stroke="#3a3938" stroke-width="1.1" stroke-linejoin="round"/>
<rect x="18.7" y="480.5" width="8.2" height="8.2" rx="1.4" fill="url(#bdg)" stroke="#3f8446" stroke-width="0.8" opacity="1"/><path d="M22.799999999999997,481.4 V487.8 M19.599999999999998,484.6 H26.0" stroke="#f3f9f5" stroke-width="2.2" fill="none" opacity="1"/>
<path d="M11.5,499.6 L23.5,505.7 M11.5,499.6 L6.4,516.7" stroke="#151515" stroke-width="1.3" fill="none"/>
<path d="M6.4,516.7 L23.5,505.7" stroke="#151515" stroke-width="1.2" stroke-dasharray="1 1.7" fill="none"/>
<circle cx="11.5" cy="499.6" r="2.6" fill="#2f8ddb"/>
<circle cx="23.5" cy="505.7" r="2.6" fill="#2f8ddb"/>
<circle cx="6.4" cy="516.7" r="2.6" fill="#2f8ddb"/>
<rect x="18.7" y="512.5" width="7.8" height="7.8" rx="1.4" fill="url(#bdg)" stroke="#3f8446" stroke-width="0.8" opacity="1"/><path d="M22.599999999999998,513.4 V519.4 M19.599999999999998,516.4 H25.6" stroke="#f3f9f5" stroke-width="2.2" fill="none" opacity="1"/>
<path d="M23.2,518.4 H27.599999999999998 L25.4,521.2 Z" fill="#1a1a1a"/>
<rect x="5.6" y="531.6" width="19.2" height="19" fill="#fafafa" stroke="#8c8b89" stroke-width="1"/>
<path d="M7.6,535 H11.6 M7.6,538 H13.6 M7.6,541 H15 M7.6,544 H13.6 M7.6,547 H15.6" stroke="#5b8fc4" stroke-width="1.3"/>
<path d="M15,534 L12.6,537.4 L15,540.8 M19.8,534 L22.2,537.4 L19.8,540.8 M18.4,533.6 L16.4,541" stroke="#1c1c1c" stroke-width="1" fill="none"/>
<rect x="18.5" y="544.3" width="8.2" height="8.2" rx="1.4" fill="url(#bdg)" stroke="#3f8446" stroke-width="0.8" opacity="1"/><path d="M22.6,545.1999999999999 V551.6 M19.4,548.4 H25.8" stroke="#f3f9f5" stroke-width="2.2" fill="none" opacity="1"/>
<rect x="5.6" y="563.4" width="19.2" height="19" rx="1" fill="#dfeaf5" stroke="#8aa9c9" stroke-width="1"/>
<path d="M8,566.4 H11.4 M13.6,566.4 H22" stroke="#6f9dcb" stroke-width="1.8"/>
<path d="M6.2,569 H24.2" stroke="#8aa9c9" stroke-width="0.8"/>
<path d="M8,571.6 H11.4 M13.6,571.6 H22 M8,574.6 H11.4 M13.6,574.6 H22 M8,577.6 H11.4 M13.6,577.6 H18" stroke="#8c8b89" stroke-width="1"/>
<rect x="17.900000000000002" y="575.9" width="8.6" height="8.6" rx="1.4" fill="url(#bdg)" stroke="#3f8446" stroke-width="0.8" opacity="1"/><path d="M22.200000000000003,576.8 V583.6 M18.8,580.1999999999999 H25.6" stroke="#f3f9f5" stroke-width="2.2" fill="none" opacity="1"/>
<rect x="5.6" y="595.4" width="19.2" height="19" rx="1" fill="#dfeaf5" stroke="#8aa9c9" stroke-width="1"/>
<path d="M8,598.4 H11.4 M13.6,598.4 H22" stroke="#6f9dcb" stroke-width="1.8"/>
<path d="M6.2,601 H24.2" stroke="#8aa9c9" stroke-width="0.8"/>
<rect x="6.4" y="607.4" width="12" height="6.4" fill="#e4e4e3"/>
<path d="M8,603.6 H11.4 M8,606.2 H11.4" stroke="#8c8b89" stroke-width="1"/>
<path d="M20.6,594.6 L13.6,606" stroke="#d9a34c" stroke-width="3.4"/><path d="M21.3,595.2 L14.4,606.4" stroke="#f1cf8a" stroke-width="1.2"/>
<path d="M12.2,608.4 L12.6,604.8 L15.2,606.4 Z" fill="#3a3938"/>
<rect x="17.900000000000002" y="607.9" width="8.6" height="8.6" rx="1.4" fill="url(#bdg)" stroke="#3f8446" stroke-width="0.8" opacity="1"/><path d="M22.200000000000003,608.8 V615.6 M18.8,612.1999999999999 H25.6" stroke="#f3f9f5" stroke-width="2.2" fill="none" opacity="1"/>
</svg>
<svg class="abs" style="left:994px;top:0" width="562" height="851" viewBox="994 0 562 851" font-family="Liberation Sans, sans-serif">
<defs>
<linearGradient id="hdr" x1="0" y1="0" x2="0" y2="1"><stop offset="0" stop-color="#fbfbfb"/><stop offset="0.5" stop-color="#f3f3f2"/><stop offset="1" stop-color="#e9e8e7"/></linearGradient>
<linearGradient id="tabA" x1="0" y1="0" x2="0" y2="1"><stop offset="0" stop-color="#fafaf9"/><stop offset="1" stop-color="#efeeed"/></linearGradient>
<linearGradient id="tabI" x1="0" y1="0" x2="0" y2="1"><stop offset="0" stop-color="#dedddc"/><stop offset="1" stop-color="#d9d8d7"/></linearGradient>
<linearGradient id="strip" x1="0" y1="0" x2="1" y2="0"><stop offset="0" stop-color="#e5e5e3"/><stop offset="1" stop-color="#f6f5f4"/></linearGradient>
<linearGradient id="sec" x1="0" y1="0" x2="0" y2="1"><stop offset="0" stop-color="#ffffff" stop-opacity="0.55"/><stop offset="0.5" stop-color="#ffffff" stop-opacity="0"/><stop offset="1" stop-color="#000000" stop-opacity="0.07"/></linearGradient>
<linearGradient id="mapi" x1="0" y1="0" x2="1" y2="1"><stop offset="0" stop-color="#89a6c1"/><stop offset="1" stop-color="#b3cade"/></linearGradient>
</defs>
<rect x="1000.5" y="22.5" width="546" height="200" fill="#fefdfc" stroke="#a5a4a2" stroke-width="1"/>
<rect x="1001" y="23" width="545" height="22" fill="url(#hdr)"/>
<rect x="1001" y="45" width="545" height="1" fill="#9f9e9c"/>
<rect x="1028" y="23" width="1" height="22" fill="#c9c8c6"/>
<rect x="1029" y="23" width="1" height="22" fill="#fdfdfd"/>
<rect x="1056" y="23" width="1" height="22" fill="#c9c8c6"/>
<rect x="1057" y="23" width="1" height="22" fill="#fdfdfd"/>
<rect x="1001" y="46" width="545" height="21" fill="#3a8dc1"/><rect x="1545" y="46" width="1" height="21" fill="#5fb3e6"/>
<rect x="1001" y="67" width="545" height="1" fill="#e3f6fd"/>
<g fill="none" stroke="#8b8a88" stroke-width="0.9">
<path d="M1003.8,34.2 Q1011,27 1018.6,34.4 Q1011,40.8 1003.8,34.2 Z" fill="#f6f6f6"/>
<path d="M1004.5,31.5 Q1011,26.8 1017.6,31.2" stroke="#b5b4b2"/>
<path d="M1005.5,37.6 Q1011,41.4 1016.8,37.6" stroke="#c5c4c2"/>
</g>
<circle cx="1011.3" cy="33.8" r="3.1" fill="#a3a2a0" stroke="#6c6b69" stroke-width="0.8"/>
<circle cx="1011.3" cy="33.8" r="1.3" fill="#3a3938"/>
<circle cx="1012.3" cy="32.8" r="0.6" fill="#fff"/>
<path d="M1035.7,35 V31.4 A3.45,3.7 0 0 1 1042.6,31.4 V35" fill="none" stroke="#838280" stroke-width="2.3"/>
<path d="M1035.7,35 V31.4 A3.45,3.7 0 0 1 1042.6,31.4 V35" fill="none" stroke="#e9e9e8" stroke-width="0.9"/>
<rect x="1033.2" y="34.3" width="11.8" height="7.5" rx="1.5" fill="#5f5e5c"/>
<rect x="1004.5" y="49.5" width="13" height="13" fill="#ffffff" stroke="#c7dceb" stroke-width="1"/>
<path d="M1007.2,56 L1010,59.6 L1014.6,51.8" fill="none" stroke="#111" stroke-width="1.8"/>
<rect x="1032.5" y="49.5" width="13" height="13" fill="#ffffff" stroke="#c7dceb" stroke-width="1"/>
<rect x="1062" y="50.5" width="12.4" height="11.2" fill="url(#mapi)"/>
<rect x="1062.5" y="51" width="2.6" height="10.2" fill="#6d8eac" opacity="0.8"/>
<text x="1004.3" y="16.9" font-size="14" fill="#161514" stroke="#161514" stroke-width="0.3" textLength="37" lengthAdjust="spacing">Items</text>
<text x="1059.3" y="39.9" font-size="14" fill="#161514" stroke="#161514" stroke-width="0.3" textLength="29.2" lengthAdjust="spacing">Item</text>
<text x="1082.4" y="61.1" font-size="14" fill="#e6f6ff" stroke="#e6f6ff" stroke-width="0.3" textLength="38.4" lengthAdjust="spacing">Map 1</text>
<rect x="1519.5" y="6.5" width="10" height="10" rx="2.2" fill="#f0efee" stroke="#6e6c69" stroke-width="1"/>
<rect x="1533.5" y="6.5" width="10" height="10" rx="2.2" fill="#f0efee" stroke="#6e6c69" stroke-width="1"/>
<rect x="1523.5" y="8.5" width="4" height="4" fill="none" stroke="#55524f" stroke-width="1"/>
<rect x="1521.5" y="10.5" width="4" height="4" fill="#f0efee" stroke="#55524f" stroke-width="1"/>
<path d="M1535.8,8.8 L1541.2,14.2 M1541.2,8.8 L1535.8,14.2" stroke="#55524f" stroke-width="2.2" stroke-linecap="butt" fill="none"/>
<rect x="1266" y="225" width="1" height="1" fill="#b9b8b6"/>
<rect x="1269" y="225" width="1" height="1" fill="#b9b8b6"/>
<rect x="1272" y="225" width="1" height="1" fill="#b9b8b6"/>
<rect x="1275" y="225" width="1" height="1" fill="#b9b8b6"/>
<rect x="1278" y="225" width="1" height="1" fill="#b9b8b6"/>
<rect x="1281" y="225" width="1" height="1" fill="#b9b8b6"/>
<rect x="997" y="429" width="1" height="1" fill="#b4b3b1"/><rect x="998" y="430" width="1" height="1" fill="#f8f8f7"/>
<rect x="997" y="432" width="1" height="1" fill="#b4b3b1"/><rect x="998" y="433" width="1" height="1" fill="#f8f8f7"/>
<rect x="997" y="435" width="1" height="1" fill="#b4b3b1"/><rect x="998" y="436" width="1" height="1" fill="#f8f8f7"/>
<rect x="997" y="438" width="1" height="1" fill="#b4b3b1"/><rect x="998" y="439" width="1" height="1" fill="#f8f8f7"/>
<rect x="997" y="441" width="1" height="1" fill="#b4b3b1"/><rect x="998" y="442" width="1" height="1" fill="#f8f8f7"/>
<rect x="997" y="444" width="1" height="1" fill="#b4b3b1"/><rect x="998" y="445" width="1" height="1" fill="#f8f8f7"/>
<rect x="1000" y="258" width="546" height="1" fill="#b3b2b0"/>
<path d="M1000.5,258.5 V234 Q1000.5,231.5 1003,231.5 H1069 Q1071.5,231.5 1071.5,234 V258.5 Z" fill="url(#tabI)" stroke="#b7b6b4" stroke-width="1"/>
<path d="M1200.5,258.5 V234 Q1200.5,231.5 1203,231.5 H1269 Q1271.5,231.5 1271.5,234 V258.5 Z" fill="url(#tabI)" stroke="#b7b6b4" stroke-width="1"/>
<path d="M1271.5,258.5 V234 Q1271.5,231.5 1274,231.5 H1326 Q1328.5,231.5 1328.5,234 V258.5 Z" fill="url(#tabI)" stroke="#b7b6b4" stroke-width="1"/>
<path d="M1071.5,259 V232 Q1071.5,229.5 1074,229.5 H1198 Q1200.5,229.5 1200.5,232 V259" fill="url(#tabA)" stroke="#b3b2b0" stroke-width="1"/><rect x="1072" y="258" width="128" height="1.5" fill="#efeeed"/>
<text x="1013.2" y="250.9" font-size="14" fill="#161514" stroke="#161514" stroke-width="0.3" textLength="44.4" lengthAdjust="spacing">Layout</text>
<text x="1083.4" y="249.8" font-size="14" fill="#161514" stroke="#161514" stroke-width="0.3" textLength="104" lengthAdjust="spacing">Item Properties</text>
<text x="1212" y="250.9" font-size="14" fill="#161514" stroke="#161514" stroke-width="0.3" textLength="46.6" lengthAdjust="spacing">Guides</text>
<text x="1283" y="250.9" font-size="14" fill="#161514" stroke="#161514" stroke-width="0.3" textLength="33.6" lengthAdjust="spacing">Atlas</text>
<text x="1004.3" y="275.8" font-size="14" fill="#161514" stroke="#161514" stroke-width="0.3" textLength="104" lengthAdjust="spacing">Item Properties</text>
<rect x="1519.5" y="265.5" width="10" height="10" rx="2.2" fill="#f0efee" stroke="#6e6c69" stroke-width="1"/>
<rect x="1533.5" y="265.5" width="10" height="10" rx="2.2" fill="#f0efee" stroke="#6e6c69" stroke-width="1"/>
<rect x="1523.5" y="267.5" width="4" height="4" fill="none" stroke="#55524f" stroke-width="1"/>
<rect x="1521.5" y="269.5" width="4" height="4" fill="#f0efee" stroke="#55524f" stroke-width="1"/>
<path d="M1535.8,267.8 L1541.2,273.2 M1541.2,267.8 L1535.8,273.2" stroke="#55524f" stroke-width="2.2" stroke-linecap="butt" fill="none"/>
<rect x="1546" y="1" width="1" height="850" fill="#a5a5a4"/>
<rect x="1547" y="1" width="9" height="760" fill="url(#strip)"/>
<rect x="1547" y="762" width="9" height="89" fill="#dbdad9"/>
<rect x="1547" y="31" width="9" height="1" fill="#a9a8a6"/>
<rect x="1547" y="57" width="9" height="1" fill="#a9a8a6"/>
<rect x="1547" y="83" width="9" height="1" fill="#a9a8a6"/>
<rect x="1547" y="90" width="9" height="1" fill="#a9a8a6"/>
<rect x="1547" y="116" width="9" height="1" fill="#a9a8a6"/>
<rect x="1547" y="256" width="9" height="1" fill="#a9a8a6"/>
<rect x="1547" y="262" width="9" height="1" fill="#a9a8a6"/>
<rect x="1547" y="271" width="9" height="1" fill="#a9a8a6"/>
<rect x="1547" y="297" width="9" height="1" fill="#a9a8a6"/>
<rect x="1547" y="325" width="9" height="1" fill="#a9a8a6"/>
<rect x="1547" y="352" width="9" height="1" fill="#a9a8a6"/>
<rect x="1547" y="373" width="9" height="1" fill="#a9a8a6"/>
<rect x="1547" y="398" width="9" height="1" fill="#a9a8a6"/>
<rect x="1547" y="424" width="9" height="1" fill="#a9a8a6"/>
<rect x="1547" y="431" width="9" height="1" fill="#a9a8a6"/>
<rect x="1547" y="457" width="9" height="1" fill="#a9a8a6"/>
<rect x="1547" y="462" width="9" height="1" fill="#a9a8a6"/>
<rect x="1547" y="761" width="9" height="1" fill="#a9a8a6"/>
<rect x="1547" y="32" width="9" height="25" fill="url(#sec)"/>
<rect x="1547" y="58" width="9" height="25" fill="url(#sec)"/>
<rect x="1547" y="91" width="9" height="25" fill="url(#sec)"/>
<rect x="1547" y="272" width="9" height="25" fill="url(#sec)"/>
<rect x="1547" y="374" width="9" height="24" fill="url(#sec)"/>
<rect x="1547" y="399" width="9" height="25" fill="url(#sec)"/>
<rect x="1547" y="432" width="9" height="25" fill="url(#sec)"/>
<rect x="1547" y="124" width="9" height="20" fill="#3a8dc1"/><rect x="1547" y="144" width="9" height="1" fill="#def3fb"/>
<path d="M1546.5,131.5 L1550,131.5 L1547.6,135.8 Z" fill="#1c2a3a"/>
<rect x="1547" y="309" width="9" height="1" fill="#2a6c97"/><rect x="1547" y="310" width="9" height="4" fill="#3a94cc"/>
<rect x="1547" y="331" width="9" height="16" fill="#3a94cc"/><rect x="1547" y="347" width="9" height="1" fill="#def3fb"/>
<clipPath id="stc"><rect x="1547" y="0" width="9" height="851"/></clipPath><g clip-path="url(#stc)" font-size="14" fill="#161514" stroke="#161514" stroke-width="0.3">
<text x="1545.5" y="475.5">ay</text>
<text x="1542.2" y="571.8">ed</text>
<text x="1545.8" y="683.8">d</text>
<text x="1547.3" y="700.2">d</text>
<text x="1546.8" y="787" font-size="15">d</text>
</g>
<rect x="1548" y="521" width="7" height="2" fill="#c22a34"/><rect x="1546" y="521" width="1" height="2" fill="#4a3a1a"/>
<rect x="1548" y="745" width="7" height="2" fill="#c22a34"/><rect x="1546" y="745" width="1" height="2" fill="#4a3a1a"/>
<rect x="1546" y="633" width="4" height="2" fill="#555452"/><rect x="1553" y="633" width="3" height="2" fill="#5c5b59"/>
</svg>
</body></html>
